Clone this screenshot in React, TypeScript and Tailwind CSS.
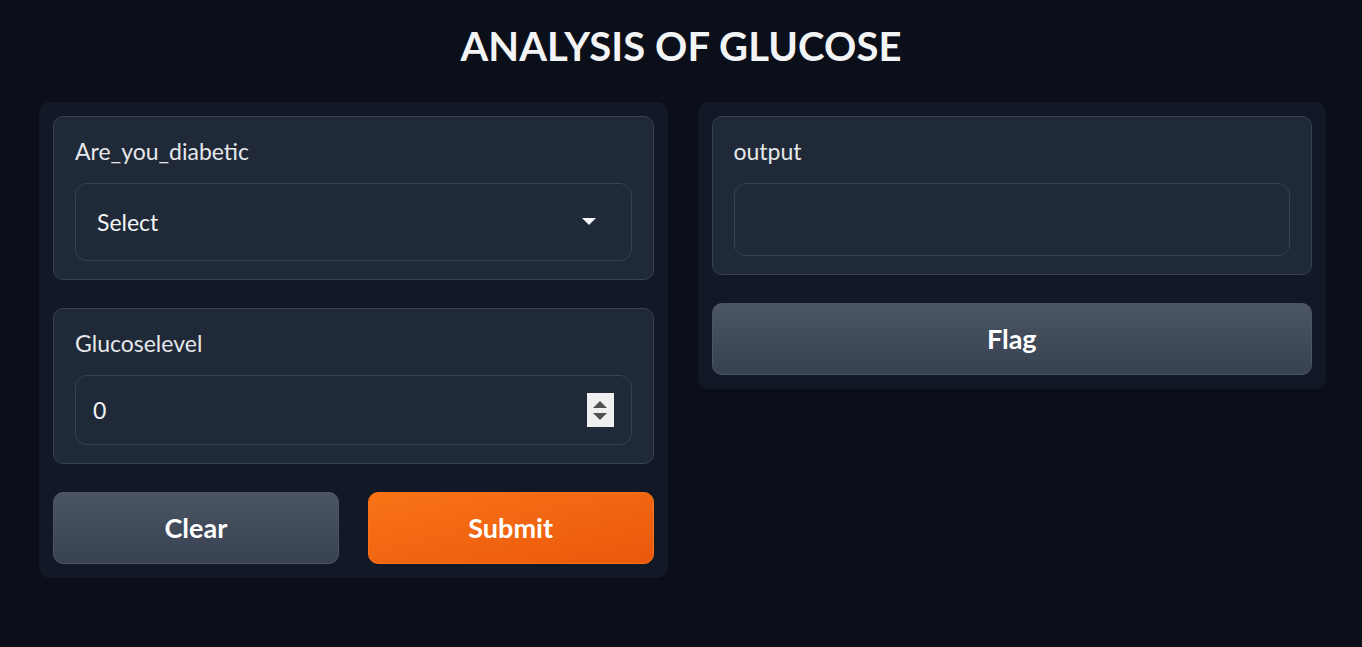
function Block({ label, children }: { label: string; children: React.ReactNode }) {
  return (
    <div className="rounded-[10px] border border-[#374151] bg-[#1f2937] px-[21px] pt-[20px] pb-[18px]">
      <div className="text-[23px] leading-[28px] text-[#e5e7eb] mb-[18px]">{label}</div>
      {children}
    </div>
  );
}

function Spinner() {
  return (
    <div className="w-[27px] h-[34px] bg-[#efefef] flex flex-col items-center justify-center gap-[5px]">
      <svg width="14" height="7" viewBox="0 0 14 7"><path d="M7 0L14 7H0Z" fill="#505050" /></svg>
      <svg width="14" height="7" viewBox="0 0 14 7"><path d="M0 0H14L7 7Z" fill="#505050" /></svg>
    </div>
  );
}

export default function App() {
  return (
    <div className="min-h-[647px] bg-[#0b0f19] font-['Lato','Liberation_Sans',sans-serif] text-white">
      <h1 className="pt-[21px] text-center text-[40px] leading-[50px] font-bold tracking-[0.1px] text-[#f3f4f6]">
        ANALYSIS OF GLUCOSE
      </h1>
      <div className="flex gap-[30px] pl-[39px] pr-[36px] mt-[31px] items-start">
        <div className="flex-1 rounded-[10px] bg-[#121826] p-[14px] flex flex-col gap-[28px]">
          <Block label="Are_you_diabetic">
            <div className="h-[78px] rounded-[12px] border border-[#374151] bg-[#1f2937] flex items-center justify-between pl-[21px] pr-[35px]">
              <span className="text-[23px] text-[#f3f4f6]">Select</span>
              <svg width="14" height="8" viewBox="0 0 14 8"><path d="M0 0H14L7 7Z" fill="#f3f4f6" /></svg>
            </div>
          </Block>
          <Block label="Glucoselevel">
            <div className="h-[70px] rounded-[12px] border border-[#374151] bg-[#1f2937] flex items-center justify-between pl-[17px] pr-[17px]">
              <span className="text-[23px] text-[#f3f4f6]">0</span>
              <Spinner />
            </div>
          </Block>
          <div className="flex gap-[29px]">
            <button className="flex-1 h-[72px] rounded-[10px] border border-[#4b5563] bg-gradient-to-b from-[#4b5563] to-[#374151] text-[27px] font-bold text-white">
              Clear
            </button>
            <button className="flex-1 h-[72px] rounded-[10px] border border-[#f97316] bg-gradient-to-br from-[#f97316] to-[#ea580c] text-[27px] font-bold text-white">
              Submit
            </button>
          </div>
        </div>
        <div className="flex-1 rounded-[10px] bg-[#121826] p-[14px] flex flex-col gap-[28px]">
          <Block label="output">
            <div className="h-[73px] rounded-[12px] border border-[#374151] bg-[#1f2937]" />
          </Block>
          <button className="h-[72px] rounded-[10px] border border-[#4b5563] bg-gradient-to-b from-[#4b5563] to-[#374151] text-[27px] font-bold text-white">
            Flag
          </button>
        </div>
      </div>
    </div>
  );
}
